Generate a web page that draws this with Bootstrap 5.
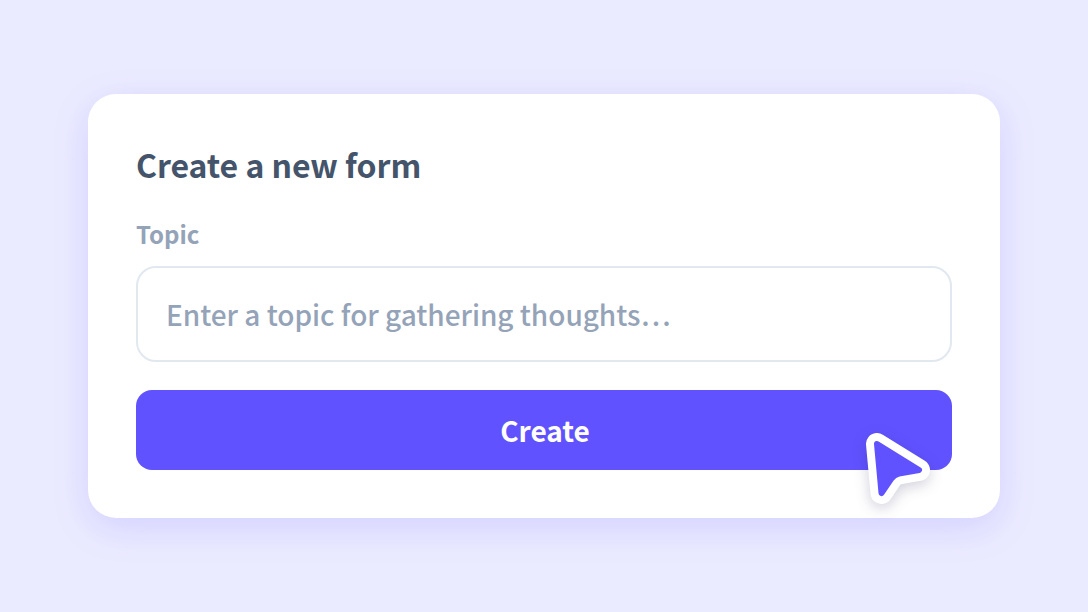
<!DOCTYPE html>
<html lang="en"><head><meta charset="utf-8"><title>Create a new form</title>
<link href="https://cdn.jsdelivr.net/npm/bootstrap@5.3.0/dist/css/bootstrap.min.css" rel="stylesheet">
<style>
html,body{height:100%;margin:0}
body{background:#ebebff;font-family:"Noto Sans CJK SC","Noto Sans","Open Sans",sans-serif;overflow:hidden}
.stage{width:1088px;height:612px;padding-top:94px;padding-left:88px}
.panel{position:relative;width:912px;height:424px;background:#fff;border-radius:28px;padding:47px 48px 48px;box-shadow:0 10px 36px rgba(96,82,255,.17)}
.ttl{font-size:32px;font-weight:700;color:#44546a;line-height:46px;margin:0 0 30px;letter-spacing:-.05px}
.lbl{display:block;font-size:24px;font-weight:700;color:#94a3b8;line-height:34px;margin:0 0 15px}
.fld{height:96px;border:2px solid #e2e8f0;border-radius:20px;padding:0 28px;font-size:28px;font-weight:500;letter-spacing:-.03px;color:#94a3b8;box-shadow:none}
.fld::placeholder{color:#94a3b8;opacity:1}
.go{height:80px;margin-top:28px;background:#6052ff;border:0;border-radius:16px;color:#fff;font-size:28px;font-weight:700;padding-left:14px}
.ptr{position:absolute;left:772px;top:332px;width:76px;height:84px;overflow:visible;filter:drop-shadow(0 4px 7px rgba(40,40,90,.22))}
</style></head><body>
<div class="stage"><div class="panel">
<h1 class="ttl">Create a new form</h1>
<label class="lbl" for="t">Topic</label>
<input id="t" class="form-control fld" placeholder="Enter a topic for gathering thoughts…">
<button class="btn w-100 d-block go">Create</button>
<svg class="ptr" viewBox="0 0 76 84"><path d="M17 18 L59 44 L39 47.5 Q34 48.5 31 53 L21.5 67 Z" fill="#fff" stroke="#fff" stroke-width="22" stroke-linejoin="round"/><path d="M17 18 L59 44 L39 47.5 Q34 48.5 31 53 L21.5 67 Z" fill="#6052ff" stroke="#6052ff" stroke-width="6" stroke-linejoin="round"/></svg>
</div></div>
<script src="https://cdn.jsdelivr.net/npm/bootstrap@5.3.0/dist/js/bootstrap.bundle.min.js"></script>
</body></html>
